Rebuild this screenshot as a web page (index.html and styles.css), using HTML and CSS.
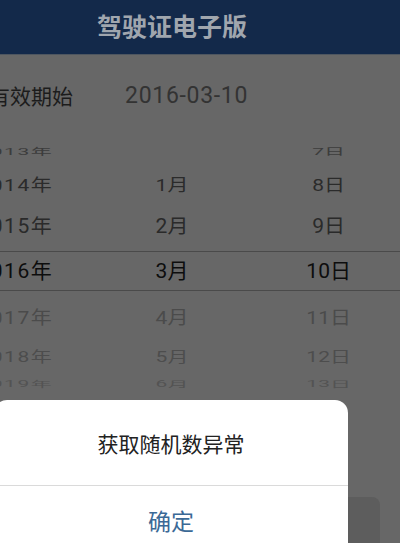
FILE: index.html
```html
<!DOCTYPE html>
<html lang="zh-CN">
<head>
<meta charset="utf-8">
<title>驾驶证电子版</title>
<link rel="stylesheet" href="styles.css">
</head>
<body>
<div class="screen">
  <header class="topbar">
    <h1 class="topbar-title">驾驶证电子版</h1>
  </header>

  <div class="field">
    <span class="field-label">有效期始</span>
    <span class="field-value">2016-03-10</span>
  </div>

  <div class="picker">
    <div class="wheel-row r1"><span class="yr">2013年</span><span></span><span>7日</span></div>
    <div class="wheel-row r2"><span class="yr">2014年</span><span>1月</span><span>8日</span></div>
    <div class="wheel-row r3"><span class="yr">2015年</span><span>2月</span><span>9日</span></div>
    <div class="wheel-row r4 selected"><span class="yr">2016年</span><span>3月</span><span>10日</span></div>
    <div class="wheel-row r5"><span class="yr">2017年</span><span>4月</span><span>11日</span></div>
    <div class="wheel-row r6"><span class="yr">2018年</span><span>5月</span><span>12日</span></div>
    <div class="wheel-row r7"><span class="yr">2019年</span><span>6月</span><span>13日</span></div>
  </div>

  <div class="actions">
    <div class="action-btn"></div>
  </div>

  <div class="dialog">
    <div class="dialog-msg">获取随机数异常</div>
    <div class="dialog-btn">确定</div>
  </div>
</div>
</body>
</html>
```

FILE: styles.css
```css
html, body {
  margin: 0;
  padding: 0;
  background: #676767;
  overflow: hidden;
}

body {
  font-family: "Roboto", "Noto Sans CJK SC", sans-serif;
}

.screen {
  position: relative;
  width: 470px;
  height: 543px;
  margin-left: -63px;
  overflow: hidden;
  background: #676767;
}

/* title bar */
.topbar {
  height: 55px;
  background: #13294a;
  border-bottom: 1px solid #4e5660;
  box-sizing: border-box;
  display: flex;
  align-items: center;
  justify-content: center;
}

.topbar-title {
  margin: 0;
  font-family: "Noto Sans CJK SC", sans-serif;
  font-size: 25px;
  font-weight: 700;
  color: #a0a6ae;
  line-height: 1;
  padding-bottom: 4px;
}

/* date field */
.field {
  height: 81px;
  display: flex;
  align-items: center;
  padding-left: 52px;
  box-sizing: border-box;
  padding-bottom: 1px;
}

.field-label {
  font-family: "Noto Sans CJK SC", sans-serif;
  font-size: 21px;
  color: #1c1c1c;
  width: 136px;
}

.field-value {
  font-size: 23px;
  color: #333;
  letter-spacing: 0.7px;
}

/* date wheel */
.picker {
  display: flex;
  flex-direction: column;
}

.wheel-row {
  display: grid;
  grid-template-columns: repeat(3, 1fr);
  align-items: center;
  text-align: center;
  font-size: 21px;
  line-height: 1;
  box-sizing: border-box;
}

.wheel-row span {
  display: block;
}

.wheel-row .yr {
  letter-spacing: 1.5px;
}

.r1 { height: 32px; color: #3c3c3c; }
.r1 span { transform: scaleY(0.45); }

.r2 { height: 34px; color: #2b2b2b; }
.r2 span { transform: scaleY(0.8); }

.r3 { height: 49px; color: #2a2a2a; }
.r3 span { transform: scaleY(0.93); }

.r4 {
  height: 40px;
  color: #0d0d0d;
  border-top: 1px solid #4a4a4a;
  border-bottom: 1px solid #4a4a4a;
}

.r5 { height: 54px; color: #4b4b4b; }
.r5 span { transform: scaleY(0.87); }

.r6 { height: 24px; color: #4d4d4d; }
.r6 span { transform: scaleY(0.68); }

.r7 { height: 30px; color: #535353; }
.r7 span { transform: scaleY(0.4); }

/* confirm button under the dialog */
.actions {
  display: flex;
  justify-content: flex-end;
  padding-top: 98px;
  padding-right: 27px;
}

.action-btn {
  width: 300px;
  height: 60px;
  background: #5d5d5d;
  border-radius: 8px;
}

/* alert */
.dialog {
  position: absolute;
  top: 400px;
  left: 50%;
  width: 354px;
  margin-left: -178px;
  background: #fff;
  border-radius: 13px 13px 0 0;
  font-family: "Noto Sans CJK SC", sans-serif;
}

.dialog-msg {
  height: 86px;
  display: flex;
  align-items: center;
  justify-content: center;
  font-size: 21px;
  color: #222;
  border-bottom: 1px solid #dadada;
  box-sizing: border-box;
}

.dialog-btn {
  height: 70px;
  display: flex;
  align-items: center;
  justify-content: center;
  font-size: 23px;
  color: #3b6996;
  padding-bottom: 2px;
  box-sizing: border-box;
}
```
